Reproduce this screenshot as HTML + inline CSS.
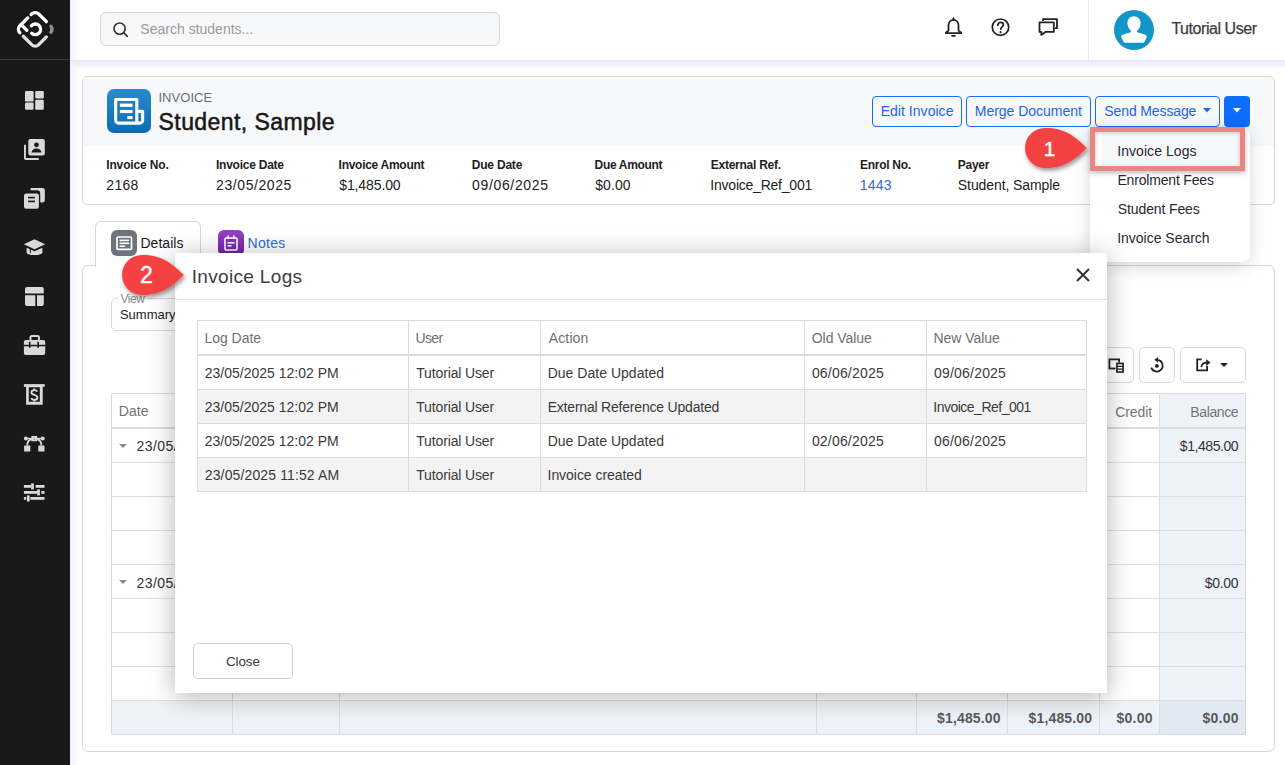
<!DOCTYPE html>
<html><head><meta charset="utf-8"><style>
*{box-sizing:border-box;margin:0;padding:0}
html,body{width:1285px;height:765px;overflow:hidden;background:#fff;font-family:"Liberation Sans",sans-serif;color:#222}
body{position:relative}
.a{position:absolute}
.t{position:absolute;white-space:nowrap}
svg{position:absolute;overflow:visible}
</style></head><body>
<div class="a" style="left:0px;top:0px;width:70px;height:765px;background:#191919"></div>
<div class="a" style="left:0px;top:59px;width:70px;height:1px;background:#3b3b3b"></div>
<div class="a" style="left:70px;top:60px;width:1215px;height:9px;background:linear-gradient(#e8e6fa,rgba(255,255,255,0))"></div>
<div class="a" style="left:70px;top:0px;width:10px;height:765px;background:linear-gradient(90deg,rgba(236,234,252,.7),rgba(255,255,255,0))"></div>
<div class="a" style="left:100px;top:12px;width:400px;height:34px;border:1px solid #d6d6d6;border-radius:6px;background:#f7f8fa"></div>
<svg style="left:112px;top:21px" width="18" height="18" viewBox="0 0 18 18"><circle cx="7.6" cy="7.6" r="5.6" fill="none" stroke="#333" stroke-width="1.6"/><path d="M11.7 11.7l3.6 3.6" stroke="#333" stroke-width="1.7" stroke-linecap="round"/></svg>
<div class="t" style="left:140.37px;top:21.9px;font-size:14px;line-height:14px;color:#9b9b9b;font-weight:normal;letter-spacing:0.003px;">Search students...</div>
<svg style="left:944px;top:17px" width="20" height="22" viewBox="0 0 20 22"><path d="M9.5 2.9c-3 0-5 2.4-5 5.6v5L1.9 15.7v.5h15.2v-.5l-2.6-2.2v-5c0-3.2-2-5.6-5-5.6z" fill="none" stroke="#222" stroke-width="1.8" stroke-linejoin="round"/><path d="M9.5 1.2v1.6" stroke="#222" stroke-width="1.8" stroke-linecap="round"/><path d="M8 18.9h3" stroke="#222" stroke-width="1.6" stroke-linecap="round"/></svg>
<svg style="left:991px;top:18px" width="20" height="20" viewBox="0 0 20 20"><circle cx="9.5" cy="9.2" r="8.2" fill="none" stroke="#222" stroke-width="1.7"/><path d="M6.8 7.2c0-1.7 1.2-2.8 2.8-2.8s2.8 1.1 2.8 2.5c0 2-2.7 2-2.7 4.3" fill="none" stroke="#222" stroke-width="1.7" stroke-linecap="round"/><circle cx="9.6" cy="14.2" r="1.1" fill="#222"/></svg>
<svg style="left:1038px;top:17px" width="21" height="21" viewBox="0 0 21 21"><path d="M5 4V2.2h14v9h-2" fill="none" stroke="#222" stroke-width="1.8" stroke-linejoin="round"/><path d="M1.5 5.3h14.3v9.6H7.5l-4.2 3v-3H1.5z" fill="none" stroke="#222" stroke-width="1.8" stroke-linejoin="round"/></svg>

<div class="a" style="left:1088px;top:0px;width:1px;height:60px;background:#ececec"></div>
<div class="a" style="left:1114px;top:10px;width:40px;height:40px;border-radius:50%;background:#1396c7"></div>
<svg style="left:1114px;top:10px" width="40" height="40" viewBox="0 0 40 40"><path d="M20 6.2c-3.9 0-6.6 2.9-6.6 7 0 3.2 1.5 5.9 3.3 7.3.5.4.4 1.4-.2 1.7-2.3 1.1-6.2 1.7-7.9 2.6-1.3.7-1.8 1.9-.9 3.2L10 32.8h20l2.3-4.8c.9-1.3.4-2.5-.9-3.2-1.7-.9-5.6-1.5-7.9-2.6-.6-.3-.7-1.3-.2-1.7 1.8-1.4 3.3-4.1 3.3-7.3 0-4.1-2.7-7-6.6-7z" fill="#fff"/></svg>
<div class="t" style="left:1171.38px;top:20.6px;font-size:16px;line-height:16px;color:#3c3c3c;font-weight:normal;letter-spacing:-0.450px;-webkit-text-stroke:0.25px #3c3c3c">Tutorial User</div>
<div class="a" style="left:82px;top:76px;width:1193px;height:129px;border:1px solid #d7d7d7;border-radius:5px;background:#fff;overflow:hidden"></div>
<div class="a" style="left:83px;top:77px;width:1191px;height:69px;background:#f7f8fa;border-radius:4px 4px 0 0"></div>
<div class="a" style="left:107px;top:89px;width:44px;height:44px;border-radius:7px;background:linear-gradient(#2a8bcb,#0a6cb4)"></div>
<svg style="left:107px;top:89px" width="44" height="44" viewBox="0 0 44 44"><path d="M29.8 22.35H35.65V31.2A2.9 2.9 0 0 1 32.75 34.1H11.55A2.9 2.9 0 0 1 8.65 31.2V10.45H29.8V33" fill="none" stroke="#fff" stroke-width="3.1" stroke-linejoin="round"/><rect x="12.9" y="14.6" width="12.6" height="3.3" fill="#fff"/><rect x="12.9" y="20.9" width="12.6" height="3.2" fill="#fff"/><rect x="20.3" y="27" width="5.2" height="3.1" fill="#fff"/></svg>
<div class="t" style="left:158.43px;top:91.0px;font-size:13px;line-height:13px;color:#6d6d6d;font-weight:normal;letter-spacing:0.043px;">INVOICE</div>
<div class="t" style="left:158.56px;top:110.6px;font-size:23px;line-height:23px;color:#161616;font-weight:normal;letter-spacing:0.428px;-webkit-text-stroke:0.5px #161616">Student, Sample</div>
<div class="a" style="left:872px;top:96px;width:90px;height:31px;border:1px solid #1a6cf8;border-radius:4px"></div>
<div class="t" style="left:880.68px;top:104.3px;font-size:14px;line-height:14px;color:#1c64ec;font-weight:normal;letter-spacing:0.034px;">Edit Invoice</div>
<div class="a" style="left:966px;top:96px;width:125px;height:31px;border:1px solid #1a6cf8;border-radius:4px"></div>
<div class="t" style="left:974.78px;top:104.3px;font-size:14px;line-height:14px;color:#1c64ec;font-weight:normal;letter-spacing:-0.015px;">Merge Document</div>
<div class="a" style="left:1095px;top:96px;width:125px;height:31px;border:1px solid #1a6cf8;border-radius:4px"></div>
<div class="t" style="left:1104.37px;top:104.3px;font-size:14px;line-height:14px;color:#1c64ec;font-weight:normal;letter-spacing:-0.123px;">Send Message</div>
<svg style="left:1203px;top:107.8px" width="8" height="4.4" viewBox="0 0 8 4.4"><path d="M0 0h8L4 4.4z" fill="#1a6cf8"/></svg>
<div class="a" style="left:1224px;top:96px;width:26px;height:31px;background:#0d6efd;border-radius:4px"></div>
<svg style="left:1232.8px;top:107.8px" width="8" height="4.4" viewBox="0 0 8 4.4"><path d="M0 0h8L4 4.4z" fill="#fff"/></svg>
<div class="t" style="left:106.22px;top:159.1px;font-size:12px;line-height:12px;color:#1e1e1e;font-weight:bold;letter-spacing:-0.143px;">Invoice No.</div>
<div class="t" style="left:106.30px;top:177.6px;font-size:14px;line-height:14px;color:#222;font-weight:normal;letter-spacing:0.315px;">2168</div>
<div class="t" style="left:216.02px;top:159.1px;font-size:12px;line-height:12px;color:#1e1e1e;font-weight:bold;letter-spacing:-0.246px;">Invoice Date</div>
<div class="t" style="left:216.10px;top:177.6px;font-size:14px;line-height:14px;color:#222;font-weight:normal;letter-spacing:0.577px;">23/05/2025</div>
<div class="t" style="left:338.62px;top:159.1px;font-size:12px;line-height:12px;color:#1e1e1e;font-weight:bold;letter-spacing:-0.281px;">Invoice Amount</div>
<div class="t" style="left:339.26px;top:177.6px;font-size:14px;line-height:14px;color:#222;font-weight:normal;letter-spacing:-0.113px;">$1,485.00</div>
<div class="t" style="left:471.82px;top:159.1px;font-size:12px;line-height:12px;color:#1e1e1e;font-weight:bold;letter-spacing:-0.217px;">Due Date</div>
<div class="t" style="left:472.08px;top:177.6px;font-size:14px;line-height:14px;color:#222;font-weight:normal;letter-spacing:0.646px;">09/06/2025</div>
<div class="t" style="left:594.62px;top:159.1px;font-size:12px;line-height:12px;color:#1e1e1e;font-weight:bold;letter-spacing:-0.332px;">Due Amount</div>
<div class="t" style="left:595.26px;top:177.6px;font-size:14px;line-height:14px;color:#222;font-weight:normal;letter-spacing:0.057px;">$0.00</div>
<div class="t" style="left:710.82px;top:159.1px;font-size:12px;line-height:12px;color:#1e1e1e;font-weight:bold;letter-spacing:-0.263px;">External Ref.</div>
<div class="t" style="left:710.34px;top:177.6px;font-size:14px;line-height:14px;color:#222;font-weight:normal;letter-spacing:-0.225px;">Invoice_Ref_001</div>
<div class="t" style="left:860.12px;top:159.1px;font-size:12px;line-height:12px;color:#1e1e1e;font-weight:bold;letter-spacing:-0.306px;">Enrol No.</div>
<div class="t" style="left:859.85px;top:177.6px;font-size:14px;line-height:14px;color:#2a6fd9;font-weight:normal;letter-spacing:0.177px;">1443</div>
<div class="t" style="left:957.72px;top:159.1px;font-size:12px;line-height:12px;color:#1e1e1e;font-weight:bold;letter-spacing:-0.260px;">Payer</div>
<div class="t" style="left:957.87px;top:177.6px;font-size:14px;line-height:14px;color:#222;font-weight:normal;letter-spacing:-0.091px;">Student, Sample</div>
<div class="a" style="left:82px;top:265px;width:1193px;height:487px;border:1px solid #d7d7d7;border-radius:6px;background:#fff"></div>
<div class="a" style="left:95px;top:221px;width:106px;height:46px;border:1px solid #d7d7d7;border-bottom:none;border-radius:6px 6px 0 0;background:#fff"></div>
<div class="a" style="left:111px;top:230px;width:26px;height:26px;border-radius:6px;background:#6c757d"></div>
<svg style="left:111px;top:230px" width="26" height="26" viewBox="0 0 26 26"><rect x="6" y="7" width="14.5" height="12.3" rx=".8" fill="none" stroke="#fff" stroke-width="1.7"/><rect x="8.6" y="9.6" width="9.4" height="1.6" fill="#fff"/><rect x="8.6" y="12.5" width="9.4" height="1.6" fill="#fff"/><rect x="8.6" y="15.4" width="5.5" height="1.6" fill="#fff"/></svg>
<div class="t" style="left:140.48px;top:235.8px;font-size:14px;line-height:14px;color:#1a1a1a;font-weight:normal;letter-spacing:0.034px;">Details</div>
<div class="a" style="left:218px;top:230px;width:26px;height:26px;border-radius:6px;background:linear-gradient(#9543c4,#6e1fa6)"></div>
<svg style="left:218px;top:230px" width="26" height="26" viewBox="0 0 26 26"><rect x="7" y="8" width="12" height="12" rx="1" fill="none" stroke="#fff" stroke-width="1.6"/><rect x="9.3" y="5.5" width="1.6" height="3.5" fill="#fff"/><rect x="15.1" y="5.5" width="1.6" height="3.5" fill="#fff"/><rect x="9.5" y="12" width="7" height="1.6" fill="#fff"/><rect x="9.5" y="15" width="4" height="1.6" fill="#fff"/></svg>
<div class="t" style="left:247.58px;top:235.8px;font-size:14px;line-height:14px;color:#2a6fe0;font-weight:normal;letter-spacing:0.259px;">Notes</div>
<div class="a" style="left:111px;top:298px;width:160px;height:33px;border:1px solid #d9d9d9;border-radius:5px"></div>
<div class="a" style="left:118px;top:292px;width:30px;height:10px;background:#fff"></div>
<div class="t" style="left:120.47px;top:292.8px;font-size:12px;line-height:12px;color:#8a8a8a;font-weight:normal;letter-spacing:-0.433px;">View</div>
<div class="t" style="left:119.92px;top:307.8px;font-size:13px;line-height:13px;color:#222;font-weight:normal;">Summary</div>
<div class="a" style="left:1092px;top:347px;width:42px;height:36px;border:1px solid #d9d9d9;border-radius:5px;background:#fff"></div>
<div class="a" style="left:1139px;top:347px;width:36px;height:36px;border:1px solid #d9d9d9;border-radius:5px;background:#fff"></div>
<div class="a" style="left:1180px;top:347px;width:66px;height:36px;border:1px solid #d9d9d9;border-radius:5px;background:#fff"></div>
<svg style="left:1100px;top:350px" width="140" height="30" viewBox="1100 350 140 30"><g fill="none" stroke="#222"><path d="M1109.4 369.3V359.4H1119.1V362.6" stroke-width="1.8"/><path d="M1109.4 368.5H1115.5" stroke-width="1.8"/><rect x="1116.9" y="363.4" width="6.2" height="8.6" stroke-width="1.6"/><path d="M1117 366.3h6M1117 369.1h6" stroke-width="1.3"/><path d="M1158.2 359.9A5.9 5.9 0 1 1 1151.2 367.6" stroke-width="1.7"/><path d="M1201.6 359.4H1197.2V370.4H1207.1V366" stroke-width="1.8"/><path d="M1201.3 367.2C1201.6 364.2 1203.6 362.6 1207 362.6" stroke-width="1.6"/></g><g fill="#222"><path d="M1154.3 359.8l3.8-2.8v5.6z"/><circle cx="1156.9" cy="365.9" r="1.9"/><path d="M1206.2 359.2l4.3 3.4-4.3 3.4z"/></g></svg>
<svg style="left:1220px;top:363px" width="8" height="4" viewBox="0 0 8 4"><path d="M0 0h8L4 4z" fill="#222"/></svg>
<div class="a" style="left:1159px;top:393px;width:87px;height:342px;background:#eef3fa"></div>
<div class="a" style="left:111px;top:700px;width:1048px;height:35px;background:#edf2f9"></div>
<div class="a" style="left:1159px;top:700px;width:87px;height:35px;background:#e1e9f3"></div>
<div class="a" style="left:111px;top:393px;width:1135px;height:342px;border:1px solid #d9d9d9"></div>
<div class="a" style="left:111px;top:427px;width:1135px;height:2px;background:#dcdcdc"></div>
<div class="a" style="left:111px;top:462px;width:1135px;height:1px;background:#dedede"></div>
<div class="a" style="left:111px;top:496px;width:1135px;height:1px;background:#dedede"></div>
<div class="a" style="left:111px;top:530px;width:1135px;height:1px;background:#dedede"></div>
<div class="a" style="left:111px;top:564px;width:1135px;height:1px;background:#dedede"></div>
<div class="a" style="left:111px;top:598px;width:1135px;height:1px;background:#dedede"></div>
<div class="a" style="left:111px;top:632px;width:1135px;height:1px;background:#dedede"></div>
<div class="a" style="left:111px;top:666px;width:1135px;height:1px;background:#dedede"></div>
<div class="a" style="left:111px;top:700px;width:1135px;height:1px;background:#dedede"></div>
<div class="a" style="left:232px;top:393px;width:1px;height:342px;background:#dedede"></div>
<div class="a" style="left:339px;top:393px;width:1px;height:342px;background:#dedede"></div>
<div class="a" style="left:816px;top:393px;width:1px;height:342px;background:#dedede"></div>
<div class="a" style="left:916px;top:393px;width:1px;height:342px;background:#dedede"></div>
<div class="a" style="left:1007px;top:393px;width:1px;height:342px;background:#dedede"></div>
<div class="a" style="left:1099px;top:393px;width:1px;height:342px;background:#dedede"></div>
<div class="a" style="left:1159px;top:393px;width:1px;height:342px;background:#dedede"></div>
<div class="t" style="left:118.78px;top:404.3px;font-size:14px;line-height:14px;color:#737373;font-weight:normal;letter-spacing:0.058px;">Date</div>
<div class="t" style="right:133.04px;top:404.5px;font-size:14px;line-height:14px;color:#737373;font-weight:normal;letter-spacing:-0.115px;">Credit</div>
<div class="t" style="right:46.76px;top:404.5px;font-size:14px;line-height:14px;color:#737373;font-weight:normal;letter-spacing:-0.377px;">Balance</div>
<svg style="left:119px;top:444px" width="8" height="4" viewBox="0 0 8 4"><path d="M0 0h8L4 4z" fill="#8a8a8a"/></svg>
<svg style="left:119px;top:580px" width="8" height="4" viewBox="0 0 8 4"><path d="M0 0h8L4 4z" fill="#8a8a8a"/></svg>
<div class="t" style="left:136.50px;top:439.1px;font-size:14px;line-height:14px;color:#333;font-weight:normal;letter-spacing:0.45px">23/05/2025</div>
<div class="t" style="left:136.50px;top:575.5px;font-size:14px;line-height:14px;color:#333;font-weight:normal;letter-spacing:0.45px">23/05/2025</div>
<div class="t" style="right:46.91px;top:439.4px;font-size:14px;line-height:14px;color:#333;font-weight:normal;letter-spacing:-0.450px;">$1,485.00</div>
<div class="t" style="right:46.82px;top:575.5px;font-size:14px;line-height:14px;color:#333;font-weight:normal;letter-spacing:-0.343px;">$0.00</div>
<div class="t" style="right:284.30px;top:710.7px;font-size:14px;line-height:14px;color:#5a5a5a;font-weight:bold;letter-spacing:0.154px;">$1,485.00</div>
<div class="t" style="right:192.80px;top:710.7px;font-size:14px;line-height:14px;color:#5a5a5a;font-weight:bold;letter-spacing:0.154px;">$1,485.00</div>
<div class="t" style="right:132.23px;top:710.7px;font-size:14px;line-height:14px;color:#5a5a5a;font-weight:bold;letter-spacing:0.241px;">$0.00</div>
<div class="t" style="right:46.23px;top:710.7px;font-size:14px;line-height:14px;color:#5a5a5a;font-weight:bold;letter-spacing:0.241px;">$0.00</div>
<div class="a" style="left:1090px;top:128px;width:160px;height:134px;background:#fff;border-radius:8px;box-shadow:0 4px 18px rgba(0,0,0,.16)"></div>
<div class="a" style="left:1102px;top:132px;width:138px;height:34px;background:#f6f7f9"></div>
<div class="t" style="left:1117.24px;top:143.6px;font-size:14px;line-height:14px;color:#262833;font-weight:normal;letter-spacing:0.058px;">Invoice Logs</div>
<div class="t" style="left:1117.38px;top:172.6px;font-size:14px;line-height:14px;color:#262833;font-weight:normal;letter-spacing:-0.172px;">Enrolment Fees</div>
<div class="t" style="left:1117.87px;top:201.6px;font-size:14px;line-height:14px;color:#262833;font-weight:normal;letter-spacing:-0.131px;">Student Fees</div>
<div class="t" style="left:1117.24px;top:230.6px;font-size:14px;line-height:14px;color:#262833;font-weight:normal;letter-spacing:-0.021px;">Invoice Search</div>
<div class="a" style="left:175px;top:253px;width:932px;height:440px;background:#fff;border-radius:3px 3px 0 0;box-shadow:0 3px 26px rgba(0,0,0,.3)"></div>
<div class="t" style="left:191.69px;top:266.6px;font-size:19px;line-height:19px;color:#3d3d3d;font-weight:normal;letter-spacing:0.335px;">Invoice Logs</div>
<svg style="left:1076px;top:268px" width="14" height="14" viewBox="0 0 14 14"><path d="M1 1l12 12M13 1L1 13" stroke="#333" stroke-width="2"/></svg>
<div class="a" style="left:175px;top:299px;width:932px;height:1px;background:#e2e2e2"></div>
<div class="a" style="left:197px;top:389px;width:890px;height:34px;background:#f3f3f3"></div>
<div class="a" style="left:197px;top:457px;width:890px;height:34px;background:#f3f3f3"></div>
<div class="a" style="left:197px;top:320px;width:890px;height:172px;border:1px solid #dcdcdc"></div>
<div class="a" style="left:197px;top:354px;width:890px;height:2px;background:#dcdcdc"></div>
<div class="a" style="left:197px;top:389px;width:890px;height:1px;background:#dcdcdc"></div>
<div class="a" style="left:197px;top:423px;width:890px;height:1px;background:#dcdcdc"></div>
<div class="a" style="left:197px;top:457px;width:890px;height:1px;background:#dcdcdc"></div>
<div class="a" style="left:408px;top:320px;width:1px;height:172px;background:#dcdcdc"></div>
<div class="a" style="left:540px;top:320px;width:1px;height:172px;background:#dcdcdc"></div>
<div class="a" style="left:804px;top:320px;width:1px;height:172px;background:#dcdcdc"></div>
<div class="a" style="left:926px;top:320px;width:1px;height:172px;background:#dcdcdc"></div>
<div class="t" style="left:204.38px;top:331.3px;font-size:14px;line-height:14px;color:#6f6f6f;font-weight:normal;letter-spacing:-0.013px;">Log Date</div>
<div class="t" style="left:415.45px;top:331.3px;font-size:14px;line-height:14px;color:#6f6f6f;font-weight:normal;letter-spacing:-0.627px;">User</div>
<div class="t" style="left:548.80px;top:331.3px;font-size:14px;line-height:14px;color:#6f6f6f;font-weight:normal;letter-spacing:0.118px;">Action</div>
<div class="t" style="left:811.77px;top:331.3px;font-size:14px;line-height:14px;color:#6f6f6f;font-weight:normal;letter-spacing:-0.053px;">Old Value</div>
<div class="t" style="left:933.48px;top:331.3px;font-size:14px;line-height:14px;color:#6f6f6f;font-weight:normal;letter-spacing:-0.041px;">New Value</div>
<div class="t" style="left:204.80px;top:366.1px;font-size:14px;line-height:14px;color:#3a3a3a;font-weight:normal;letter-spacing:-0.003px;">23/05/2025 12:02 PM</div>
<div class="t" style="left:416.22px;top:366.1px;font-size:14px;line-height:14px;color:#3a3a3a;font-weight:normal;letter-spacing:-0.142px;">Tutorial User</div>
<div class="t" style="left:547.68px;top:366.1px;font-size:14px;line-height:14px;color:#3a3a3a;font-weight:normal;letter-spacing:0.023px;">Due Date Updated</div>
<div class="t" style="left:811.88px;top:366.1px;font-size:14px;line-height:14px;color:#3a3a3a;font-weight:normal;letter-spacing:0.191px;">06/06/2025</div>
<div class="t" style="left:934.08px;top:366.1px;font-size:14px;line-height:14px;color:#3a3a3a;font-weight:normal;letter-spacing:0.191px;">09/06/2025</div>
<div class="t" style="left:204.80px;top:400.1px;font-size:14px;line-height:14px;color:#3a3a3a;font-weight:normal;letter-spacing:-0.003px;">23/05/2025 12:02 PM</div>
<div class="t" style="left:416.22px;top:400.1px;font-size:14px;line-height:14px;color:#3a3a3a;font-weight:normal;letter-spacing:-0.142px;">Tutorial User</div>
<div class="t" style="left:547.68px;top:400.1px;font-size:14px;line-height:14px;color:#3a3a3a;font-weight:normal;letter-spacing:-0.202px;">External Reference Updated</div>
<div class="t" style="left:933.34px;top:400.1px;font-size:14px;line-height:14px;color:#3a3a3a;font-weight:normal;letter-spacing:-0.510px;">Invoice_Ref_001</div>
<div class="t" style="left:204.80px;top:434.1px;font-size:14px;line-height:14px;color:#3a3a3a;font-weight:normal;letter-spacing:-0.003px;">23/05/2025 12:02 PM</div>
<div class="t" style="left:416.22px;top:434.1px;font-size:14px;line-height:14px;color:#3a3a3a;font-weight:normal;letter-spacing:-0.142px;">Tutorial User</div>
<div class="t" style="left:547.68px;top:434.1px;font-size:14px;line-height:14px;color:#3a3a3a;font-weight:normal;letter-spacing:0.023px;">Due Date Updated</div>
<div class="t" style="left:811.88px;top:434.1px;font-size:14px;line-height:14px;color:#3a3a3a;font-weight:normal;letter-spacing:0.191px;">02/06/2025</div>
<div class="t" style="left:934.08px;top:434.1px;font-size:14px;line-height:14px;color:#3a3a3a;font-weight:normal;letter-spacing:0.191px;">06/06/2025</div>
<div class="t" style="left:204.80px;top:468.1px;font-size:14px;line-height:14px;color:#3a3a3a;font-weight:normal;letter-spacing:0.126px;">23/05/2025 11:52 AM</div>
<div class="t" style="left:416.22px;top:468.1px;font-size:14px;line-height:14px;color:#3a3a3a;font-weight:normal;letter-spacing:-0.142px;">Tutorial User</div>
<div class="t" style="left:547.54px;top:468.1px;font-size:14px;line-height:14px;color:#3a3a3a;font-weight:normal;letter-spacing:-0.042px;">Invoice created</div>
<div class="a" style="left:193px;top:643px;width:100px;height:36px;border:1px solid #cfcfcf;border-radius:5px;background:#fff"></div>
<div class="t" style="left:226.02px;top:654.5px;font-size:13.5px;line-height:13.5px;color:#3a3a3a;font-weight:normal;letter-spacing:-0.161px;">Close</div>
<div class="a" style="left:1089.5px;top:127px;width:155.5px;height:44px;border:5px solid rgba(236,126,126,.95);box-shadow:inset 0 1px 4px rgba(0,0,0,.2),0 2px 5px rgba(0,0,0,.25)"></div>
<svg style="left:1021px;top:124px" width="74" height="52" viewBox="1021 124 74 52"><defs><filter id="sh1" x="-30%" y="-30%" width="160%" height="170%"><feDropShadow dx="1.5" dy="2.5" stdDeviation="2.2" flood-color="#000" flood-opacity=".42"/></filter></defs><path filter="url(#sh1)" d="M1087 148 C1076 138 1066 127.5 1045 128 A20 20 0 0 0 1045 168 C1066 168.5 1076 158 1087 148Z" fill="#f44343"/></svg>
<div class="t" style="left:749.5px;width:600px;text-align:center;top:137.6px;font-size:21px;line-height:21px;color:#fff;font-weight:normal;-webkit-text-stroke:0.4px #fff">1</div>
<svg style="left:118px;top:251px" width="74" height="52" viewBox="118 251 74 52"><defs><filter id="sh2" x="-30%" y="-30%" width="160%" height="170%"><feDropShadow dx="1.5" dy="2.5" stdDeviation="2.2" flood-color="#000" flood-opacity=".42"/></filter></defs><path filter="url(#sh2)" d="M184 275 C173 265 163 254.5 142 255 A20 20 0 0 0 142 295 C163 295.5 173 285 184 275Z" fill="#f44343"/></svg>
<div class="t" style="left:-153.5px;width:600px;text-align:center;top:263.8px;font-size:23px;line-height:23px;color:#fff;font-weight:normal;-webkit-text-stroke:0.4px #fff">2</div>
<svg style="left:0;top:0" width="70" height="520" viewBox="0 0 70 520">
<g fill="#d9d9d9">
<!-- dashboard -->
<rect x="25" y="91" width="8.6" height="10.6" rx="1.2"/><rect x="35.2" y="91" width="8.6" height="7.4" rx="1.2"/>
<rect x="25" y="102.6" width="8.6" height="7.2" rx="1.2"/><rect x="35.2" y="99.8" width="8.6" height="10" rx="1.2"/>
<!-- contacts -->
<rect x="28.3" y="139" width="16.5" height="16.5" rx="2.2"/>
<path d="M24 144.8h1.9v13.2h12.8v1.9H26a2 2 0 0 1-2-2z"/>
<!-- copy -->
<path d="M30.5 188h12a2.3 2.3 0 0 1 2.3 2.3v10a2.3 2.3 0 0 1-2.3 2.3h-2.3v-9.3a3 3 0 0 0-3-3h-6.7z"/>
<rect x="23.4" y="193" width="16.1" height="16.4" rx="2.8" stroke="#191919" stroke-width="1.2"/>
<!-- grad cap -->
<path d="M34.5 239.2l10.7 5-10.7 5-10.7-5z"/>
<path d="M26.6 247.7l7.9 3.6 7.9-3.6v4.5c0 1.8-3.5 2.9-7.9 2.9s-7.9-1.1-7.9-2.9z"/>
<!-- layout -->
<path d="M27 287h14.8a2 2 0 0 1 2 2v4.6H25V289a2 2 0 0 1 2-2z"/>
<path d="M25 295.2h10.3V306H27a2 2 0 0 1-2-2z"/><path d="M37 295.2h6.8V304a2 2 0 0 1-2 2H37z"/>
<!-- briefcase -->
<path d="M29.5 340v-2.8c0-1.2 1-2.2 2.2-2.2h6c1.2 0 2.2 1 2.2 2.2V340h-2v-2.9h-6.4V340z"/>
<rect x="23.9" y="340" width="21.3" height="15" rx="2"/>
<!-- receipt -->
<rect x="23.9" y="384.1" width="20.8" height="2.7"/>
<path d="M26.1 386h16.6v18.7H26.1z M28.8 387.2v14.5h11v-14.5z" fill-rule="evenodd"/>
<!-- bezier -->
<path d="M31.3 435.9h5.9v5.4h-5.9z M33.5 437.8v1.8h1.6v-1.8z" fill-rule="evenodd"/>
<rect x="24.1" y="445.5" width="6.2" height="6.1" rx=".6"/><rect x="38.3" y="445.5" width="6.2" height="6.1" rx=".6"/>
<circle cx="25.9" cy="438.6" r="2"/><circle cx="42.7" cy="438.6" r="2"/>
<!-- sliders -->
<rect x="23.9" y="485" width="7.2" height="2.8"/><rect x="35.6" y="485" width="8.9" height="2.8"/>
<rect x="31.1" y="483.4" width="2.8" height="6"/>
<rect x="23.9" y="491" width="13.2" height="2.8"/><rect x="41.3" y="491" width="3.2" height="2.8"/>
<rect x="37.1" y="489.4" width="2.8" height="6"/>
<rect x="23.9" y="497" width="2.3" height="2.8"/><rect x="30.4" y="497" width="14.1" height="2.8"/>
<rect x="26.9" y="495.4" width="2.8" height="6.1"/>
</g>
<g fill="none" stroke="#d9d9d9">
<path d="M26 438.6h17" stroke-width="1.5"/>
<path d="M27.2 445.6c0-3.6 1.8-5.6 4.3-6.4M41.4 445.6c0-3.6-1.8-5.6-4.3-6.4" stroke-width="1.8"/>
</g>
<g fill="#191919">
<rect x="32.5" y="341.8" width="1.6" height="6" transform="translate(-3.6 0)"/>
<rect x="39" y="341.8" width="1.6" height="6" transform="translate(-1.6 0)"/>
<rect x="23.9" y="344.8" width="21.3" height="1.5"/>
<rect x="28" y="196.8" width="7" height="1.6"/><rect x="28" y="200.6" width="7" height="1.6"/>
<circle cx="36.5" cy="144.8" r="2.4"/><path d="M31.5 152.5c.3-2.5 2.5-4 5-4s4.7 1.5 5 4z"/>
<path d="M30.3 248.6v4.6" stroke="#191919" stroke-width="1" fill="none"/>

</g>
<g fill="none" stroke="#d9d9d9" stroke-width="1.9"><path d="M37.2 391.6c-.5-1-1.6-1.5-2.9-1.5-1.7 0-2.9.9-2.9 2.3 0 3.1 6 1.8 6 5.1 0 1.4-1.3 2.4-3.1 2.4-1.4 0-2.6-.6-3.1-1.7"/><path d="M34.3 388.4v1.8M34.3 399.9v1.6"/></g>
<!-- logo -->
<g transform="translate(35.2 29.3) rotate(45)" fill="none" stroke-linecap="round" stroke-width="3.3">
<path d="M-13.3 -7.5 V-8.3 A5 5 0 0 1 -8.3 -13.3 H2.5" stroke="#fff"/>
<path d="M9 -13.25 A5 5 0 0 1 13.25 -9" stroke="#8c8c8c"/>
<path d="M13.3 -2.5 V8.3 A5 5 0 0 1 8.3 13.3 H-3.5" stroke="#e2e2e2"/>
<path d="M-13.3 -2.8 V8.3 A5 5 0 0 0 -8.5 13.3" stroke="#fff"/>
<path d="M-13.3 6.6 H-5.2" stroke="#fff"/>
<path d="M-5.2 0.3 A5.3 5.3 0 1 1 0.3 5.2" stroke="#fff"/>
</g>
</svg>

</body></html>
